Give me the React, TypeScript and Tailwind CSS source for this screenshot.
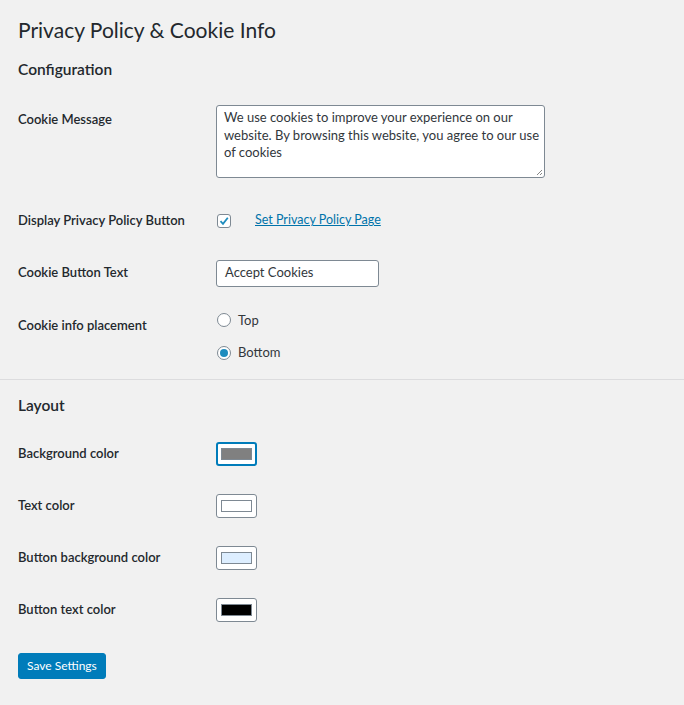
import React from 'react';

const labelCls = 'w-[198px] shrink-0 text-[13px] font-semibold text-[#23282d]';

const Swatch = ({ color, focused }: { color: string; focused?: boolean }) => (
  <div
    className={
      'w-[41px] h-[24px] rounded-[3px] bg-white flex items-center justify-center ' +
      (focused ? 'border-2 border-[#007cba]' : 'border border-[#7e8993]')
    }
  >
    <div className="w-[31px] h-[12px] border border-[#7e8993]" style={{ backgroundColor: color }} />
  </div>
);

export default function App() {
  return (
    <main className="bg-[#f1f1f1] min-h-[705px] w-full font-['Lato',sans-serif] text-[#23282d]">
      <div className="px-[18px] pt-[15px]">
        <h1 className="text-[21px] leading-[30px] font-normal">Privacy Policy &amp; Cookie Info</h1>
        <h2 className="mt-[14px] text-[15.5px] leading-[20px] font-semibold">Configuration</h2>

        <div className="flex items-start mt-[26px]">
          <div className={labelCls + ' pt-[5px]'}>Cookie Message</div>
          <div className="relative w-[329px] h-[73px] bg-white border border-[#7e8993] rounded-[3px] pl-[7px] pr-[4px] py-[3px] text-[13px] leading-[17.5px] text-[#32373c]">
            We use cookies to improve your experience on our
            <br />
            website. By browsing this website, you agree to our use
            <br />
            of cookies
            <svg className="absolute right-[1px] bottom-[1px]" width="8" height="8" viewBox="0 0 8 8">
              <path d="M7 2 L2 7 M7 5 L5 7" stroke="#888" strokeWidth="1" />
            </svg>
          </div>
        </div>

        <div className="flex items-center mt-[33px]">
          <div className={labelCls}>Display Privacy Policy Button</div>
          <div className="w-[14px] h-[14px] ml-[1px] bg-white border border-[#7e8993] rounded-[3px] flex items-center justify-center">
            <svg width="12" height="12" viewBox="0 0 12 12">
              <path d="M2.5 6.2 L5 8.8 L9.8 2.8" fill="none" stroke="#1e8cbe" strokeWidth="1.8" />
            </svg>
          </div>
          <a href="#" className="ml-[24px] text-[12.5px] text-[#0073aa] underline">Set Privacy Policy Page</a>
        </div>

        <div className="flex items-center mt-[29px]">
          <div className={labelCls}>Cookie Button Text</div>
          <div className="w-[163px] h-[27px] bg-white border border-[#7e8993] rounded-[3px] px-[8px] flex items-center text-[13px] text-[#32373c]">
            Accept Cookies
          </div>
        </div>

        <div className="flex items-start mt-[24px]">
          <div className={labelCls + ' pt-[5px]'}>Cookie info placement</div>
          <div className="flex flex-col gap-[13px] ml-[1px]">
            <label className="flex items-center gap-[7px] text-[13px] text-[#32373c]">
              <span className="w-[14px] h-[14px] rounded-full bg-white border border-[#7e8993]" />
              Top
            </label>
            <label className="flex items-center gap-[7px] text-[13px] text-[#32373c]">
              <span className="w-[14px] h-[14px] rounded-full bg-white border border-[#7e8993] flex items-center justify-center">
                <span className="w-[8px] h-[8px] rounded-full bg-[#1e8cbe]" />
              </span>
              Bottom
            </label>
          </div>
        </div>
      </div>

      <hr className="mt-[16px] border-0 border-t border-[#dcdcde]" />

      <div className="px-[18px]">
        <h2 className="mt-[15px] text-[15.5px] leading-[20px] font-semibold">Layout</h2>

        {[
          ['Background color', '#808080', true],
          ['Text color', '#ffffff', false],
          ['Button background color', '#ddeeff', false],
          ['Button text color', '#000000', false],
        ].map(([label, color, focused], i) => (
          <div key={label as string} className={'flex items-center ' + (i === 0 ? 'mt-[27px]' : 'mt-[28px]')}>
            <div className={labelCls}>{label as string}</div>
            <Swatch color={color as string} focused={focused as boolean} />
          </div>
        ))}

        <button className="mt-[31px] h-[26px] px-[8px] bg-[#007cba] text-white text-[12px] rounded-[3px] border border-[#007cba]">
          Save Settings
        </button>
      </div>
    </main>
  );
}
